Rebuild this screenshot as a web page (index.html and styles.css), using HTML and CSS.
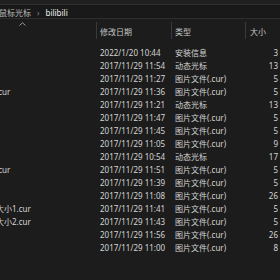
FILE: index.html
```html
<!DOCTYPE html>
<html lang="zh-CN">
<head>
  <meta charset="UTF-8">
  <meta name="viewport" content="width=device-width, initial-scale=1.0">
  <title>bilibili</title>
  <link rel="stylesheet" href="styles.css">
</head>
<body>
  <div class="topstrip"></div>
  <div class="address">
    <span class="crumb">鼠标光标</span>
    <span class="chev">›</span>
    <span class="crumb current">bilibili</span>
  </div>
  <div class="list">
    <div class="row head">
      <div class="cell name"><svg class="sort" width="7" height="4" viewBox="0 0 7 4"><path d="M0.5 3.5 L3.5 0.8 L6.5 3.5" fill="none" stroke="#9a9a9a" stroke-width="1"/></svg></div>
      <div class="cell">修改日期</div>
      <div class="cell">类型</div>
      <div class="cell">大小</div>
    </div>
    <div class="row"><div class="cell name">安装.inf</div><div class="cell">2022/1/20 10:44</div><div class="cell">安装信息</div><div class="cell size"><span class="num">3</span> KB</div></div>
    <div class="row"><div class="cell name">后台运行.ani</div><div class="cell">2017/11/29 11:54</div><div class="cell">动态光标</div><div class="cell size"><span class="num">13</span> KB</div></div>
    <div class="row"><div class="cell name">帮助选择.cur</div><div class="cell">2017/11/29 11:27</div><div class="cell">图片文件(.cur)</div><div class="cell size"><span class="num">5</span> KB</div></div>
    <div class="row"><div class="cell name">垂直调整大小.cur</div><div class="cell">2017/11/29 11:36</div><div class="cell">图片文件(.cur)</div><div class="cell size"><span class="num">5</span> KB</div></div>
    <div class="row"><div class="cell name">忙.ani</div><div class="cell">2017/11/29 11:21</div><div class="cell">动态光标</div><div class="cell size"><span class="num">13</span> KB</div></div>
    <div class="row"><div class="cell name">精确选择.cur</div><div class="cell">2017/11/29 11:47</div><div class="cell">图片文件(.cur)</div><div class="cell size"><span class="num">5</span> KB</div></div>
    <div class="row"><div class="cell name">链接选择.cur</div><div class="cell">2017/11/29 11:45</div><div class="cell">图片文件(.cur)</div><div class="cell size"><span class="num">5</span> KB</div></div>
    <div class="row"><div class="cell name">手写.cur</div><div class="cell">2017/11/29 11:05</div><div class="cell">图片文件(.cur)</div><div class="cell size"><span class="num">9</span> KB</div></div>
    <div class="row"><div class="cell name">移动.ani</div><div class="cell">2017/11/29 10:54</div><div class="cell">动态光标</div><div class="cell size"><span class="num">17</span> KB</div></div>
    <div class="row"><div class="cell name">水平调整大小.cur</div><div class="cell">2017/11/29 11:51</div><div class="cell">图片文件(.cur)</div><div class="cell size"><span class="num">5</span> KB</div></div>
    <div class="row"><div class="cell name">文本选择.cur</div><div class="cell">2017/11/29 11:39</div><div class="cell">图片文件(.cur)</div><div class="cell size"><span class="num">5</span> KB</div></div>
    <div class="row"><div class="cell name">候选.cur</div><div class="cell">2017/11/29 11:08</div><div class="cell">图片文件(.cur)</div><div class="cell size"><span class="num">26</span> KB</div></div>
    <div class="row"><div class="cell name">沿对角线调整大小1.cur</div><div class="cell">2017/11/29 11:41</div><div class="cell">图片文件(.cur)</div><div class="cell size"><span class="num">5</span> KB</div></div>
    <div class="row"><div class="cell name">沿对角线调整大小2.cur</div><div class="cell">2017/11/29 11:43</div><div class="cell">图片文件(.cur)</div><div class="cell size"><span class="num">5</span> KB</div></div>
    <div class="row"><div class="cell name">正常选择.cur</div><div class="cell">2017/11/29 11:56</div><div class="cell">图片文件(.cur)</div><div class="cell size"><span class="num">26</span> KB</div></div>
    <div class="row"><div class="cell name">不可用.cur</div><div class="cell">2017/11/29 11:00</div><div class="cell">图片文件(.cur)</div><div class="cell size"><span class="num">8</span> KB</div></div>
  </div>
</body>
</html>
```

FILE: styles.css
```css
*, *::before, *::after {
  padding: 0;
  margin: 0;
  box-sizing: border-box;
}

body {
  width: 280px;
  height: 280px;
  overflow: hidden;
  background: #1c1c1c;
  color: #d4d4d4;
  font-family: "Noto Sans", "Noto Sans CJK SC", sans-serif;
  font-size: 8px;
}

.topstrip {
  height: 5px;
  background: #202020;
  border-bottom: 1px solid #2e2e2e;
}

.address {
  height: 14px;
  display: flex;
  align-items: center;
  gap: 6px;
  margin-left: -1px;
  padding-top: 2px;
  background: #191919;
  border-bottom: 1px solid #2e2e2e;
  white-space: nowrap;
}

.crumb {
  color: #bdbdbd;
}

.crumb.current {
  color: #ececec;
}

.chev {
  color: #8a8a8a;
  font-size: 8px;
}

.list {
  margin-left: -66px;
  width: 362px;
}

.row {
  display: grid;
  grid-template-columns: 162px 75px 74px 51px;
  height: 13px;
  padding-top: 2px;
  align-items: center;
  white-space: nowrap;
}

.row.head {
  height: 26px;
  padding-top: 0;
  align-items: start;
  color: #c4c4c4;
}

.head .cell {
  margin-top: 3px;
  height: 17px;
  padding-top: 2px;
  line-height: 15px;
  border-left: 1px solid #3a3a3a;
  padding-left: 3px;
}

.head .cell.name {
  border-left: none;
  margin-top: 0;
  display: flex;
  justify-content: center;
  align-items: flex-start;
  padding-top: 3px;
}

.cell {
  padding-left: 4px;
  overflow: hidden;
}

.cell.name {
  padding-left: 14px;
}

.cell.size {
  overflow: visible;
}

.num {
  display: inline-block;
  width: 29px;
  text-align: right;
}

.head .cell:last-child {
  padding-left: 4px;
}
```
